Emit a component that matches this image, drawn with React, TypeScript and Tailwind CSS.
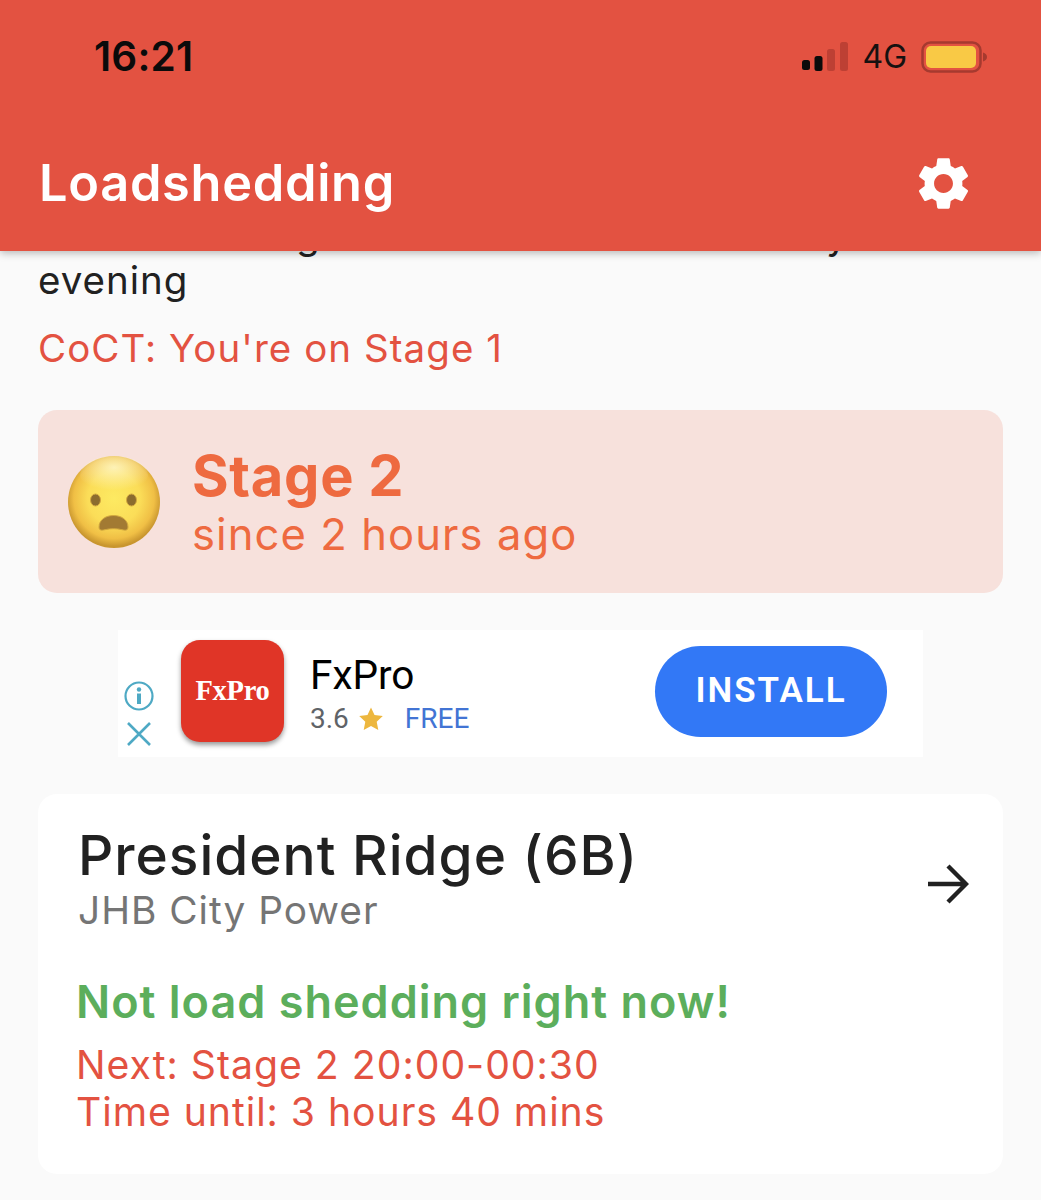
import React from "react";

const font = { fontFamily: "Inter, 'Liberation Sans', sans-serif" };

function Gear() {
  return (
    <svg width="63" height="63" viewBox="0 0 24 24" fill="#fff">
      <path d="M19.14 12.94c.04-.3.06-.61.06-.94 0-.32-.02-.64-.07-.94l2.03-1.58c.18-.14.23-.41.12-.61l-1.92-3.32c-.12-.22-.37-.29-.59-.22l-2.39.96c-.5-.38-1.03-.7-1.62-.94l-.36-2.54c-.04-.24-.24-.41-.48-.41h-3.84c-.24 0-.43.17-.47.41l-.36 2.54c-.59.24-1.13.57-1.62.94l-2.39-.96c-.22-.08-.47 0-.59.22L2.74 8.87c-.12.21-.08.47.12.61l2.03 1.58c-.05.3-.09.63-.09.94s.02.64.07.94l-2.03 1.58c-.18.14-.23.41-.12.61l1.92 3.32c.12.22.37.29.59.22l2.39-.96c.5.38 1.03.7 1.62.94l.36 2.54c.05.24.24.41.48.41h3.84c.24 0 .44-.17.47-.41l.36-2.54c.59-.24 1.13-.56 1.62-.94l2.39.96c.22.08.47 0 .59-.22l1.92-3.32c.12-.22.07-.47-.12-.61l-2.01-1.58zM12 15.6c-1.98 0-3.6-1.62-3.6-3.6s1.62-3.6 3.6-3.6 3.6 1.62 3.6 3.6-1.62 3.6-3.6 3.6z" />
    </svg>
  );
}

function Signal() {
  return (
    <svg width="46" height="30" viewBox="0 0 46 30">
      <rect x="0" y="18" width="8" height="10" rx="2.5" fill="#0b0b0b" />
      <rect x="12.5" y="14" width="8" height="15" rx="2.5" fill="#0b0b0b" />
      <rect x="25" y="7" width="8" height="22" rx="2.5" fill="#bd4034" />
      <rect x="38" y="0" width="8" height="29" rx="2.5" fill="#bd4034" />
    </svg>
  );
}

function Battery() {
  return (
    <svg width="66" height="32" viewBox="0 0 66 32">
      <rect x="1.5" y="1.5" width="58" height="29" rx="8" fill="none" stroke="#a63a2f" strokeWidth="2.5" />
      <rect x="5" y="5" width="50" height="22" rx="5" fill="#f9c945" />
      <path d="M62 11.5c2.5.8 4 2.4 4 4.5s-1.500 3.700-4 4.500z" fill="#a63a2f" />
    </svg>
  );
}

function Emoji() {
  return (
    <svg width="94" height="94" viewBox="0 0 94 94">
      <defs>
        <radialGradient id="face" cx="50%" cy="46%" r="52%">
          <stop offset="0%" stopColor="#fdea62" />
          <stop offset="55%" stopColor="#fbdd58" />
          <stop offset="84%" stopColor="#f0bf45" />
          <stop offset="100%" stopColor="#c9962f" />
        </radialGradient>
        <radialGradient id="shine" cx="50%" cy="30%" r="60%">
          <stop offset="0%" stopColor="#fff9cf" stopOpacity="0.8" />
          <stop offset="100%" stopColor="#fff9cf" stopOpacity="0" />
        </radialGradient>
      </defs>
      <circle cx="47" cy="47" r="46" fill="url(#face)" />
      <ellipse cx="47" cy="20" rx="34" ry="19" fill="url(#shine)" />
      <ellipse cx="28.500" cy="45" rx="5" ry="6" fill="#8c6c2e" stroke="#d2a83f" strokeWidth="1" />
      <ellipse cx="64.500" cy="45" rx="5" ry="6" fill="#8c6c2e" stroke="#d2a83f" strokeWidth="1" />
      <path d="M32 72c0-7 6.500-11.500 14.500-11.500S61 65 61 72c0 3.500-2.500 3.500-6 2.700-2.800-.7-5.700-1-8.500-1s-5.700.3-8.500 1c-3.500.8-6 .8-6-2.700z" fill="#a27a33" stroke="#d2a83f" strokeWidth="1" />
    </svg>
  );
}

function AdChoices() {
  return (
    <div className="flex flex-col items-center gap-[10px] w-[30px] mt-[51px]">
      <svg width="30" height="30" viewBox="0 0 30 30" fill="none">
        <circle cx="15" cy="15" r="13.500" stroke="#4ea9c4" strokeWidth="2.200" />
        <circle cx="15" cy="8.500" r="2.200" fill="#4ea9c4" />
        <rect x="13" y="12.500" width="4" height="10.500" fill="#4ea9c4" />
      </svg>
      <svg width="26" height="26" viewBox="0 0 26 26" fill="none">
        <path d="M2 2l22 22M24 2L2 24" stroke="#4ea9c4" strokeWidth="2.600" />
      </svg>
    </div>
  );
}

function Star() {
  return (
    <svg width="24" height="24" viewBox="0 0 24 24">
      <path d="M12 .5l3.500 7.600 8.300 1-6.100 5.700 1.600 8.200L12 18.900 4.700 23l1.600-8.200L.2 9.100l8.300-1z" fill="#edb73e" />
    </svg>
  );
}

export default function App() {
  return (
    <div className="w-[1041px] h-[1200px] overflow-hidden bg-[#fafafa] flex flex-col" style={font}>
      <header className="relative z-10 h-[251px] shrink-0 bg-[#e35241] shadow-[0_2px_8px_rgba(0,0,0,0.28)] flex flex-col">
        <div className="h-[116px] pl-[94px] pr-[54px] flex items-start justify-between pt-[34px]">
          <span className="text-[40.5px] leading-[46px] font-semibold text-[#0b0b0b] tracking-[0.2px]">16:21</span>
          <div className="flex items-center gap-[14px] mt-[5px]">
            <Signal />
            <span className="text-[32px] leading-[36px] text-[#161110]">4G</span>
            <Battery />
          </div>
        </div>
        <div className="flex-1 pl-[39px] pr-[65px] flex items-center justify-between">
          <h1 className="text-[50.5px] leading-[56px] font-semibold text-white tracking-[0.7px] -mt-[2px]">Loadshedding</h1>
          <div className="mr-[1px] -mt-[1px]"><Gear /></div>
        </div>
      </header>

      <main className="px-[38px] -mt-[40px] flex flex-col">
        <p className="text-[38.5px] leading-[49px] text-[#212121] tracking-[1px] whitespace-nowrap">Load shedding will continue until Saturday</p>
        <p className="text-[38.5px] leading-[49px] text-[#212121] tracking-[1px] -mt-[4px]">evening</p>
        <p className="mt-[19px] text-[38.5px] leading-[48px] text-[#e35241] tracking-[1.050px]">CoCT: You're on Stage 1</p>

        <section className="mt-[38px] h-[183px] rounded-[19px] bg-[#f7e1dc] flex items-center pl-[29px] gap-[31px]">
          <Emoji />
          <div className="flex flex-col mt-[2px]">
            <span className="text-[56px] leading-[60px] font-bold text-[#ee6a40] tracking-[0.7px]">Stage 2</span>
            <span className="text-[43.5px] leading-[52px] text-[#ee6a40] tracking-[1.1px] mt-[2px]">since 2 hours ago</span>
          </div>
        </section>

        <section className="mt-[37px] mx-[80px] h-[127px] bg-white flex items-start pl-[6px]">
          <AdChoices />
          <div className="mt-[10px] ml-[27px] w-[103px] h-[102px] rounded-[19px] bg-[#e03527] shadow-[0_3px_5px_rgba(0,0,0,0.4)] flex items-center justify-center">
            <span className="text-[28.5px] text-white font-bold tracking-[-0.3px]" style={{ fontFamily: "'Liberation Serif', serif" }}>FxPro</span>
          </div>
          <div className="ml-[26px] mt-[23px] flex flex-col">
            <span className="text-[40.5px] leading-[44px] text-black" style={{ fontFamily: "Roboto, sans-serif" }}>FxPro</span>
            <div className="flex items-center mt-[6px]" style={{ fontFamily: "Roboto, sans-serif" }}>
              <span className="text-[28px] leading-[32px] text-[#5f6368]">3.6</span>
              <span className="ml-[10px]"><Star /></span>
              <span className="ml-[22px] text-[28px] leading-[32px] text-[#4274d4]">FREE</span>
            </div>
          </div>
          <button className="ml-auto mr-[36px] mt-[16px] w-[232px] h-[91px] rounded-full bg-[#3278f6] text-white text-[35px] font-semibold tracking-[2px]" style={{ fontFamily: "Roboto, sans-serif" }}>INSTALL</button>
        </section>

        <section className="mt-[37px] h-[380px] rounded-[19px] bg-white pl-[40px] pr-[34px] pt-[31px]">
          <div className="flex items-center justify-between">
            <div className="flex flex-col">
              <span className="text-[55px] leading-[60px] font-[550] text-[#212121] tracking-[1px]">President Ridge (6B)</span>
              <span className="text-[38.8px] leading-[46px] text-[#757575] tracking-[1px] mt-[2px]">JHB City Power</span>
            </div>
            <svg className="mt-[10px]" width="42" height="44" viewBox="0 0 42 44" fill="none" stroke="#212121" strokeWidth="4.400">
              <path d="M1 22h38M21 4l18 18-18 18" />
            </svg>
          </div>
          <p className="mt-[41px] -ml-[2px] text-[45px] leading-[56px] font-semibold text-[#5cae5c] tracking-[1px]">Not load shedding right now!</p>
          <p className="mt-[11px] -ml-[2px] text-[39.2px] leading-[47px] text-[#e35241] tracking-[1px]">Next: Stage 2 20:00-00:30</p>
          <p className="-ml-[2px] text-[39.2px] leading-[47px] text-[#e35241] tracking-[0.950px]">Time until: 3 hours 40 mins</p>
        </section>
      </main>
    </div>
  );
}
